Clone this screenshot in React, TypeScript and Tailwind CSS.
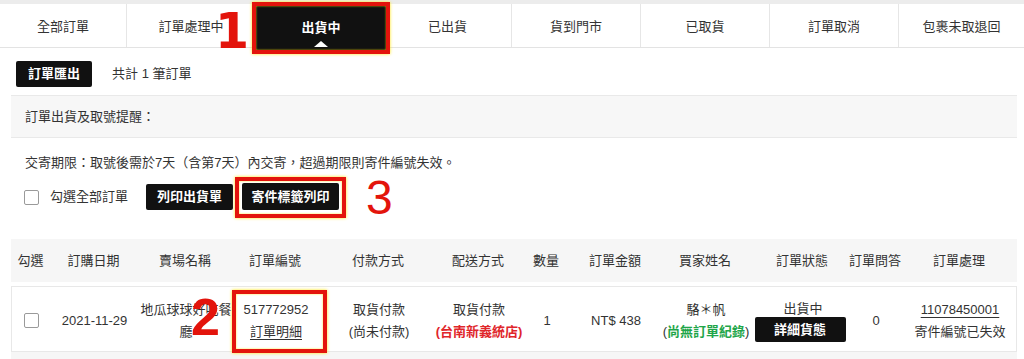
import React from 'react';

const tabs = [
  { label: '全部訂單', w: 'w-[127px]' },
  { label: '訂單處理中', w: 'w-[129px]' },
  { label: '出貨中', w: 'w-[128px]', active: true },
  { label: '已出貨', w: 'w-[128px]' },
  { label: '貨到門市', w: 'w-[129px]' },
  { label: '已取貨', w: 'w-[129px]' },
  { label: '訂單取消', w: 'w-[129px]' },
  { label: '包裹未取退回', w: 'flex-1' },
];

const cols = [
  { h: '勾選', w: 'w-[39px]' },
  { h: '訂購日期', w: 'w-[87px]' },
  { h: '賣場名稱', w: 'w-[96px]' },
  { h: '訂單編號', w: 'w-[84px]' },
  { h: '付款方式', w: 'w-[122px]' },
  { h: '配送方式', w: 'w-[78px]' },
  { h: '數量', w: 'w-[58px]' },
  { h: '訂單金額', w: 'w-[80px]' },
  { h: '買家姓名', w: 'w-[100px]' },
  { h: '訂單狀態', w: 'w-[94px]' },
  { h: '訂單問答', w: 'w-[52px]' },
  { h: '訂單處理', w: 'w-[116px]' },
];

const frame =
  'absolute z-10 border-4 border-solid border-[#e3140c] shadow-[0_0_3px_rgba(255,230,0,0.95),inset_0_0_2px_rgba(255,230,0,0.95)] pointer-events-none';

function Checkbox() {
  return <span className="inline-block w-[15px] h-[15px] border border-[#9a9a9a] rounded-[2px] bg-white" />;
}

export default function App() {
  return (
    <div className="relative w-[1024px] h-[359px] overflow-hidden bg-white text-[13px] text-[#333] font-['Liberation_Sans','Noto_Sans_CJK_TC',sans-serif]">
      <div className="h-[4px] bg-[#ececec]" />
      {/* tabs */}
      <div className="flex h-[44px] border-b border-[#e3e3e3]">
        {tabs.map((t, i) => (
          <div
            key={t.label}
            className={`${t.w} relative flex items-center justify-center leading-[20px] ${
              i < tabs.length - 1 ? 'border-r border-[#e6e6e6]' : ''
            }`}
          >
            {t.active ? (
              <div className={`${frame} left-[-4px] top-[-2px] w-[138px] h-[52px] bg-[#111] flex items-center justify-center pb-[1px]`}>
                <span className="text-white font-bold leading-[20px]">{t.label}</span>
                <span className="absolute left-1/2 -translate-x-1/2 bottom-[3px] w-0 h-0 border-l-[7px] border-r-[7px] border-b-[6px] border-l-transparent border-r-transparent border-b-white" />
              </div>
            ) : (
              <span className="pt-[3px]">{t.label}</span>
            )}
          </div>
        ))}
      </div>

      {/* export row */}
      <div className="flex items-center pl-[16px] pt-[13px] gap-[20px]">
        <button className="h-[26px] px-[12px] bg-[#111] text-white font-bold rounded-[2px] leading-[26px]">訂單匯出</button>
        <span className="leading-[20px]">共計 1 筆訂單</span>
      </div>

      {/* notice box */}
      <div className="mx-[11px] mt-[8px] w-[1006px] h-[43px] bg-[#f7f7f7] border-t border-b border-[#e9e9e9] flex items-center pl-[14px] leading-[20px]">
        訂單出貨及取號提醒：
      </div>

      <div className="pl-[25px] mt-[15px] leading-[20px]">交寄期限：取號後需於7天（含第7天）內交寄，超過期限則寄件編號失效。</div>

      <div className="flex items-center pl-[24px] mt-[11px] h-[26px]">
        <Checkbox />
        <span className="ml-[11px] leading-[20px]">勾選全部訂單</span>
        <button className="ml-[18px] h-[26px] w-[87px] bg-[#111] text-white font-bold rounded-[2px] leading-[26px]">列印出貨單</button>
        <span className="relative ml-[9px] inline-flex">
          <button className="h-[27px] w-[97px] bg-[#111] text-white font-bold rounded-[2px] leading-[27px] -mt-[1px]">寄件標籤列印</button>
          <span className={`${frame} left-[-7px] top-[-7px] w-[111px] h-[41px]`} />
        </span>
      </div>

      {/* table */}
      <div className="ml-[11px] mt-[29px] w-[1006px]">
        <div className="flex h-[43px] items-center bg-[#f6f6f6]">
          {cols.map((c) => (
            <div key={c.h} className={`${c.w} shrink-0 text-center whitespace-nowrap leading-[20px]`}>
              {c.h}
            </div>
          ))}
        </div>
        <div className="mt-[4px] flex h-[66px] items-center border border-[#e8e8e8] pt-[3px] leading-[22px]">
          <div className="w-[39px] shrink-0 flex justify-center">
            <Checkbox />
          </div>
          <div className="w-[87px] shrink-0 text-center">2021-11-29</div>
          <div className="w-[96px] shrink-0 text-center">地瓜球球好吃餐廳</div>
          <div className="w-[84px] shrink-0 text-center relative">
            <div>517772952</div>
            <div className="underline underline-offset-[3px]">訂單明細</div>
            <span className={`${frame} left-[-2px] top-[-9px] w-[95px] h-[63px]`} />
          </div>
          <div className="w-[122px] shrink-0 text-center whitespace-nowrap">
            <div>取貨付款</div>
            <div>(尚未付款)</div>
          </div>
          <div className="w-[78px] shrink-0 text-center whitespace-nowrap flex flex-col items-center">
            <div>取貨付款</div>
            <div className="text-[#e0262b] font-bold">(台南新義統店)</div>
          </div>
          <div className="w-[58px] shrink-0 text-center">1</div>
          <div className="w-[80px] shrink-0 text-center whitespace-nowrap">NT$ 438</div>
          <div className="w-[100px] shrink-0 text-center whitespace-nowrap">
            <div>駱＊帆</div>
            <div>
              (<span className="text-[#1fa64a] font-bold">尚無訂單紀錄</span>)
            </div>
          </div>
          <div className="w-[94px] shrink-0 flex flex-col items-center">
            <div className="leading-[18px] mb-[-1px]">出貨中</div>
            <button className="w-[91px] h-[25px] bg-[#111] text-white font-bold rounded-[2px] leading-[25px] -ml-[6px]">詳細貨態</button>
          </div>
          <div className="w-[52px] shrink-0 text-center">0</div>
          <div className="w-[116px] shrink-0 text-center whitespace-nowrap">
            <div className="underline underline-offset-[3px]">11078450001</div>
            <div>寄件編號已失效</div>
          </div>
        </div>
        <div className="h-[20px] bg-[#f6f6f6]" />
      </div>

      {/* annotation numbers */}
      <span className="absolute z-20 left-[215px] top-[7px] text-[49px] leading-none font-bold text-[#e3140c] font-['DejaVu_Sans',sans-serif]">1</span>
      <span className="absolute z-20 left-[191px] top-[291px] text-[52px] leading-none font-bold text-[#e3140c] font-['Liberation_Sans',sans-serif]">2</span>
      <span className="absolute z-20 left-[366px] top-[174px] text-[48px] leading-none text-[#e3140c] font-['Liberation_Sans',sans-serif]">3</span>
    </div>
  );
}
